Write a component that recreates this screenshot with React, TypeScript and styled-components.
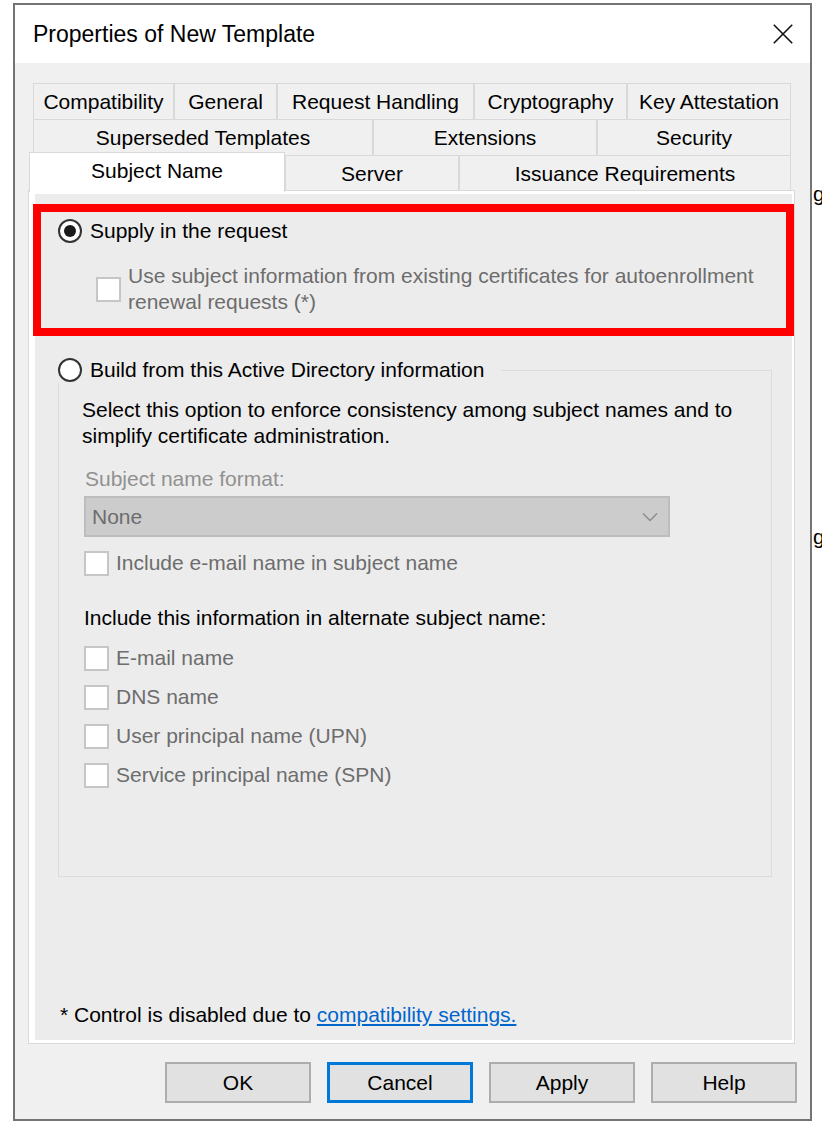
import React from "react";
import styled, { createGlobalStyle } from "styled-components";

const GlobalStyle = createGlobalStyle`
  html, body { margin: 0; padding: 0; background: #ffffff; }
  body { font-family: "Liberation Sans", Arial, sans-serif; }
  #root { width: 822px; height: 1124px; }
  * { box-sizing: border-box; }
`;

const Page = styled.div`
  width: 822px;
  height: 1124px;
  overflow: hidden;
  display: flex;
  align-items: flex-start;
  padding: 3px 0 0 13px;
  background: #ffffff;
  font-family: "Liberation Sans", Arial, sans-serif;
  font-size: 21px;
  line-height: 26px;
  color: #000000;
`;

const Window = styled.div`
  flex-shrink: 0;
  width: 799px;
  height: 1118px;
  border: 2px solid #747474;
  background: #f0f0f0;
  display: flex;
  flex-direction: column;
`;

const BehindWindow = styled.div`
  width: 10px;
  height: 100%;
  overflow: hidden;
  display: flex;
  flex-direction: column;
  padding: 178px 0 0 1px;
  font-size: 21px;
  line-height: 26px;
  color: #000;
`;

const BehindGlyph = styled.span<{ $gap: number }>`
  display: block;
  margin-top: ${(p) => p.$gap}px;
`;

const TitleBar = styled.div`
  height: 58px;
  flex-shrink: 0;
  background: #ffffff;
  display: flex;
  align-items: center;
  justify-content: space-between;
  padding: 0 17px 0 18px;
`;

const Title = styled.div`
  font-size: 23px;
  line-height: 58px;
  color: #000;
`;

const CloseButton = styled.div`
  width: 20px;
  height: 20px;
  display: flex;
`;

const Body = styled.div`
  flex: 1;
  display: flex;
  flex-direction: column;
  padding: 20px 15px 16px 13px;
`;

const TabStrip = styled.div`
  display: flex;
  flex-direction: column;
`;

const TabRow = styled.div<{ $inset: number }>`
  display: flex;
  align-items: flex-end;
  height: 36px;
  margin: 0 4px 0 ${(p) => p.$inset}px;
`;

const Tab = styled.div<{ $w: number; $active?: boolean }>`
  width: ${(p) => p.$w}px;
  flex-shrink: 0;
  height: ${(p) => (p.$active ? 40 : 36)}px;
  margin-bottom: ${(p) => (p.$active ? -1 : 0)}px;
  padding-bottom: ${(p) => (p.$active ? 4 : 0)}px;
  position: relative;
  z-index: ${(p) => (p.$active ? 2 : 0)};
  display: flex;
  align-items: center;
  justify-content: center;
  background: ${(p) => (p.$active ? "#ffffff" : "#f0f0f0")};
  border: 1px solid #d9d9d9;
  border-bottom: none;
  font-size: 21px;
  line-height: 26px;
  color: #000;
  white-space: nowrap;
`;

const Panel = styled.div`
  flex: 1;
  display: flex;
  margin-top: -1px;
  border: 1px solid #d9d9d9;
  background: #ffffff;
  padding: 3px 2px 3px 6px;
  position: relative;
  z-index: 1;
`;

const TabPage = styled.div`
  flex: 1;
  display: flex;
  flex-direction: column;
  background: #ececec;
`;

const Highlight = styled.div`
  margin: 10px -2px 0 -2px;
  border: 8px solid #ff0000;
  padding: 6px 0 13px 17px;
  display: flex;
  flex-direction: column;
  gap: 19px;
`;

const OptionRow = styled.label<{ $indent?: number; $disabled?: boolean }>`
  display: flex;
  align-items: center;
  gap: ${(p) => (p.$indent !== undefined ? 7 : 8)}px;
  margin-left: ${(p) => p.$indent ?? 0}px;
  color: ${(p) => (p.$disabled ? "#6d6d6d" : "#000000")};
  font-size: 21px;
  line-height: 26px;
  white-space: nowrap;
`;

const Radio = styled.span<{ $checked?: boolean }>`
  flex-shrink: 0;
  width: 24px;
  height: 24px;
  border-radius: 50%;
  border: 2px solid #333333;
  background: #ffffff;
  display: flex;
  align-items: center;
  justify-content: center;
  &::after {
    content: "";
    width: 12px;
    height: 12px;
    border-radius: 50%;
    background: #1a1a1a;
    display: ${(p) => (p.$checked ? "block" : "none")};
  }
`;

const CheckBox = styled.span`
  flex-shrink: 0;
  width: 25px;
  height: 25px;
  border: 2px solid #c6c6c6;
  background: #ffffff;
`;

const GroupBox = styled.fieldset`
  margin: 21px 20px 0 23px;
  padding: 0;
  min-width: 0;
  border: 1px solid #dcdcdc;
`;

const GroupLegend = styled.legend`
  margin-left: -1px;
  padding: 0 17px 0 0;
  background: #ececec;
`;

const GroupContent = styled.div`
  display: flex;
  flex-direction: column;
  padding: 14px 0 88px 23px;
`;

const Description = styled.div`
  font-size: 21px;
  line-height: 26px;
  color: #000;
`;

const FieldLabel = styled.div<{ $disabled?: boolean; $top: number }>`
  margin: ${(p) => p.$top}px 0 0 ${(p) => (p.$disabled ? 3 : 2)}px;
  color: ${(p) => (p.$disabled ? "#919191" : "#000000")};
  font-size: 21px;
  line-height: 26px;
`;

const Combo = styled.div`
  margin: 4px 0 0 2px;
  width: 586px;
  height: 41px;
  background: #cccccc;
  border: 2px solid #bdbdbd;
  display: flex;
  align-items: center;
  justify-content: space-between;
  padding: 0 10px 0 6px;
  color: #6d6d6d;
  font-size: 21px;
`;

const CheckList = styled.div<{ $top: number }>`
  display: flex;
  flex-direction: column;
  gap: 13px;
  margin: ${(p) => p.$top}px 0 0 2px;
`;

const Footer = styled.div`
  margin-top: auto;
  margin-bottom: 12px;
  padding-left: 25px;
  font-size: 21px;
  line-height: 26px;
  color: #000;
`;

const Link = styled.a`
  color: #0066cc;
  text-decoration: underline;
`;

const ButtonBar = styled.div`
  display: flex;
  justify-content: flex-end;
  gap: 16px;
  margin: 18px -2px 0 0;
`;

const DialogButton = styled.div<{ $default?: boolean }>`
  width: 146px;
  height: 41px;
  display: flex;
  align-items: center;
  justify-content: center;
  background: #e1e1e1;
  border: ${(p) => (p.$default ? "3px solid #0078d7" : "2px solid #adadad")};
  font-size: 21px;
  color: #000;
`;

const rowOne = [
  { label: "Compatibility", w: 141 },
  { label: "General", w: 103 },
  { label: "Request Handling", w: 197 },
  { label: "Cryptography", w: 153 },
  { label: "Key Attestation", w: 164 },
];
const rowTwo = [
  { label: "Superseded Templates", w: 340 },
  { label: "Extensions", w: 224 },
  { label: "Security", w: 194 },
];
const rowThree = [
  { label: "Subject Name", w: 256, active: true },
  { label: "Server", w: 174 },
  { label: "Issuance Requirements", w: 332 },
];

const altNames = [
  "E-mail name",
  "DNS name",
  "User principal name (UPN)",
  "Service principal name (SPN)",
];

export default function App() {
  return (
    <>
      <GlobalStyle />
      <Page>
        <Window>
          <TitleBar>
            <Title>Properties of New Template</Title>
            <CloseButton>
              <svg width="20" height="20" viewBox="0 0 20 20">
                <path d="M0.8 0.8 L19.2 19.2 M19.2 0.8 L0.8 19.2" stroke="#111" strokeWidth="1.6" fill="none" />
              </svg>
            </CloseButton>
          </TitleBar>
          <Body>
            <TabStrip>
              <TabRow $inset={5}>
                {rowOne.map((t) => (
                  <Tab key={t.label} $w={t.w}>{t.label}</Tab>
                ))}
              </TabRow>
              <TabRow $inset={5}>
                {rowTwo.map((t) => (
                  <Tab key={t.label} $w={t.w}>{t.label}</Tab>
                ))}
              </TabRow>
              <TabRow $inset={1}>
                {rowThree.map((t) => (
                  <Tab key={t.label} $w={t.w} $active={t.active}>{t.label}</Tab>
                ))}
              </TabRow>
            </TabStrip>
            <Panel>
              <TabPage>
                <Highlight>
                  <OptionRow>
                    <Radio $checked />
                    <span>Supply in the request</span>
                  </OptionRow>
                  <OptionRow $indent={38} $disabled>
                    <CheckBox />
                    <span>
                      Use subject information from existing certificates for autoenrollment
                      <br />
                      renewal requests (*)
                    </span>
                  </OptionRow>
                </Highlight>
                <GroupBox>
                  <GroupLegend>
                    <OptionRow>
                      <Radio />
                      <span>Build from this Active Directory information</span>
                    </OptionRow>
                  </GroupLegend>
                  <GroupContent>
                    <Description>
                      Select this option to enforce consistency among subject names and to
                      <br />
                      simplify certificate administration.
                    </Description>
                    <FieldLabel $disabled $top={17}>Subject name format:</FieldLabel>
                    <Combo>
                      <span>None</span>
                      <svg width="16" height="10" viewBox="0 0 16 10">
                        <polyline points="1,1.5 8,8.5 15,1.5" stroke="#8c8c8c" strokeWidth="1.5" fill="none" />
                      </svg>
                    </Combo>
                    <CheckList $top={13}>
                      <OptionRow $indent={0} $disabled>
                        <CheckBox />
                        <span>Include e-mail name in subject name</span>
                      </OptionRow>
                    </CheckList>
                    <FieldLabel $top={29}>Include this information in alternate subject name:</FieldLabel>
                    <CheckList $top={14}>
                      {altNames.map((n) => (
                        <OptionRow key={n} $indent={0} $disabled>
                          <CheckBox />
                          <span>{n}</span>
                        </OptionRow>
                      ))}
                    </CheckList>
                  </GroupContent>
                </GroupBox>
                <Footer>
                  * Control is disabled due to <Link>compatibility settings.</Link>
                </Footer>
              </TabPage>
            </Panel>
            <ButtonBar>
              <DialogButton>OK</DialogButton>
              <DialogButton $default>Cancel</DialogButton>
              <DialogButton>Apply</DialogButton>
              <DialogButton>Help</DialogButton>
            </ButtonBar>
          </Body>
        </Window>
        <BehindWindow>
          <BehindGlyph $gap={0}>g</BehindGlyph>
          <BehindGlyph $gap={317}>g</BehindGlyph>
        </BehindWindow>
      </Page>
    </>
  );
}
